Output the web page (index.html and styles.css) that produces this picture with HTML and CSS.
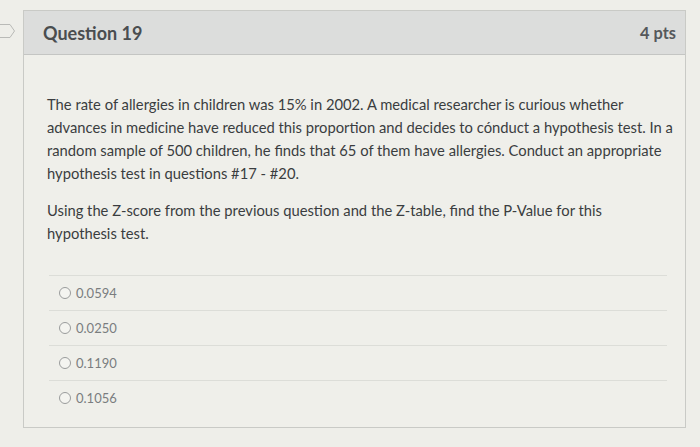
FILE: index.html
```html
<!DOCTYPE html>
<html>
<head>
<meta charset="utf-8">
<link rel="stylesheet" href="styles.css">
</head>
<body>
<div class="page">
  <svg class="marker" width="16" height="18" viewBox="0 0 16 18"><path d="M0 2.5 H10 L14.5 9 L10 15.5 H0" fill="none" stroke="#b9bab7" stroke-width="1"/></svg>
  <div class="card">
    <div class="header">
      <span class="title">Question 19</span>
      <span class="pts">4 pts</span>
    </div>
    <div class="body">
      <p class="para">The rate of allergies in children was 15% in 2002. A medical researcher is curious whether advances in medicine have reduced this proportion and decides to cónduct a hypothesis test. In a random sample of 500 children, he finds that 65 of them have allergies. Conduct an appropriate hypothesis test in questions #17 - #20.</p>
      <p class="para second">Using the Z-score from the previous question and the Z-table, find the P-Value for this hypothesis test.</p>
      <div class="answers">
        <div class="answer"><span class="radio"></span><span class="val">0.0594</span></div>
        <div class="answer"><span class="radio"></span><span class="val">0.0250</span></div>
        <div class="answer"><span class="radio"></span><span class="val">0.1190</span></div>
        <div class="answer"><span class="radio"></span><span class="val">0.1056</span></div>
      </div>
    </div>
  </div>
</div>
</body>
</html>
```
FILE: styles.css
```css
html, body { margin: 0; padding: 0; }
body {
  width: 700px; height: 447px; overflow: hidden;
  background: #eeeee9;
  font-family: Lato, "Open Sans", sans-serif;
  color: #3a3d40;
}
.page { position: relative; padding: 10px 14px 0 23px; }
.marker { position: absolute; left: 0; top: 22px; }
.card {
  border: 1px solid #c9cac6;
  background: #efefea;
  height: 418px;
  box-sizing: border-box;
}
.header {
  height: 44px; box-sizing: border-box;
  background: #dcdddc;
  border-bottom: 1px solid #c4c5c3;
  display: flex; justify-content: space-between; align-items: center;
  padding: 0 9px 0 19px;
}
.title { font-weight: 700; font-size: 18px; color: #4a4d50; }
.pts { font-weight: 700; font-size: 16.4px; color: #55585b; }
.body { padding: 38px 6px 0 23px; }
.para { margin: 0; font-size: 14.75px; line-height: 23px; }
.second { margin-top: 14px; width: 580px; }
.answers { margin-top: 30px; margin-right: 12px; padding-left: 2px; }
.answer {
  height: 34px; border-top: 1px solid #dcddd8;
  display: flex; align-items: center; padding-left: 10px;
  font-size: 13px; color: #7a7d7f;
}
.radio {
  width: 10px; height: 10px; border: 1px solid #9a9c9c; border-radius: 50%;
  margin-right: 5px; background: #f4f4f0;
}
```
